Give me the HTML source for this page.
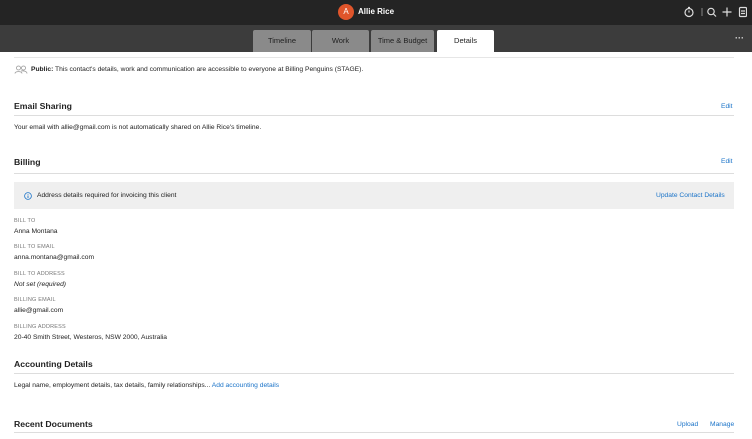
<!DOCTYPE html>
<html><head><style>
*{margin:0;padding:0;box-sizing:border-box}
body{width:752px;height:439px;overflow:hidden;background:#fff;font-family:"Liberation Sans",sans-serif;color:#222;position:relative}
.a{position:absolute;white-space:nowrap}
.s{font-size:6.7px}
.h{font-size:8.7px;font-weight:bold;color:#222}
.l{font-size:5.5px;color:#777;letter-spacing:.2px}
.ln{position:absolute;left:14px;width:720px;height:1px;background:#ddd}
.lk{color:#1a73c8;font-size:6.7px}
.tab{position:absolute;top:30px;height:22px;background:#8a8a8a;color:#222;font-size:7.5px;text-align:center;line-height:22px;border-radius:2px 2px 0 0}
</style></head><body>
<div class="a" style="left:0;top:0;width:752px;height:25px;background:#242424"></div>
<div class="a" style="left:0;top:25px;width:752px;height:27px;background:#3c3c3c"></div>
<div class="a" style="left:338px;top:4px;width:16px;height:16px;border-radius:50%;background:#e0552b;color:#fff;font-size:8px;text-align:center;line-height:16px">A</div>
<div class="a" style="left:358px;top:7px;color:#fff;font-size:8px;font-weight:bold">Allie Rice</div>
<svg class="a" style="left:683px;top:6px" width="64" height="12" viewBox="0 0 64 12" fill="none" stroke="#ddd" stroke-width="1.2">
<circle cx="6" cy="6.5" r="4"/><path d="M6 4.5V6.5M5 1.5H7"/>
<path d="M19 2V10" stroke="#777"/>
<circle cx="28" cy="5.5" r="3.2"/><path d="M30.5 8L33 10.5"/>
<path d="M44 1.5V10.5M39.5 6H48.5"/>
<rect x="56.5" y="1.5" width="7" height="9" rx="1"/><path d="M58 5H62M58 7.5H62"/>
</svg>
<div class="tab" style="left:253px;width:58px">Timeline</div>
<div class="tab" style="left:312px;width:57px">Work</div>
<div class="tab" style="left:371px;width:63px">Time &amp; Budget</div>
<div class="tab" style="left:437px;width:57px;background:#fff">Details</div>
<div class="a" style="left:735px;top:33px;color:#ddd;font-size:9px;font-weight:bold">···</div>
<div class="ln" style="top:57px;background:#e6e6e6"></div>
<svg class="a" style="left:14px;top:65px" width="14" height="9" viewBox="0 0 14 9" fill="none" stroke="#999" stroke-width=".8"><circle cx="4.5" cy="3" r="2"/><path d="M1 8.5C1 6 8 6 8 8.5"/><circle cx="9.5" cy="3" r="2"/><path d="M7 6C9 5.5 13 6 13 8.5"/></svg>
<div class="a s" style="left:31px;top:66px"><b>Public:</b> This contact's details, work and communication are accessible to everyone at Billing Penguins (STAGE).</div>
<div class="a h" style="left:14px;top:101px">Email Sharing</div>
<div class="a lk" style="left:721px;top:103px">Edit</div>
<div class="ln" style="top:115px"></div>
<div class="a s" style="left:14px;top:124px">Your email with allie@gmail.com is not automatically shared on Allie Rice's timeline.</div>
<div class="a h" style="left:14px;top:157px">Billing</div>
<div class="a lk" style="left:721px;top:158px">Edit</div>
<div class="ln" style="top:173px"></div>
<div class="a" style="left:14px;top:182px;width:720px;height:27px;background:#efefef"></div>
<svg class="a" style="left:24px;top:192px" width="8" height="8" viewBox="0 0 8 8"><circle cx="4" cy="4" r="3.4" fill="none" stroke="#1a73c8" stroke-width=".8"/><path d="M4 3.5V6M4 2V2.6" stroke="#1a73c8" stroke-width=".9"/></svg>
<div class="a s" style="left:37px;top:192px">Address details required for invoicing this client</div>
<div class="a lk" style="left:656px;top:192px">Update Contact Details</div>
<div class="a l" style="left:14px;top:218px">BILL TO</div>
<div class="a s" style="left:14px;top:228px">Anna Montana</div>
<div class="a l" style="left:14px;top:244px">BILL TO EMAIL</div>
<div class="a s" style="left:14px;top:254px">anna.montana@gmail.com</div>
<div class="a l" style="left:14px;top:271px">BILL TO ADDRESS</div>
<div class="a s" style="left:14px;top:281px;font-style:italic">Not set (required)</div>
<div class="a l" style="left:14px;top:297px">BILLING EMAIL</div>
<div class="a s" style="left:14px;top:307px">allie@gmail.com</div>
<div class="a l" style="left:14px;top:324px">BILLING ADDRESS</div>
<div class="a s" style="left:14px;top:334px">20-40 Smith Street, Westeros, NSW 2000, Australia</div>
<div class="a h" style="left:14px;top:359px">Accounting Details</div>
<div class="ln" style="top:373px"></div>
<div class="a s" style="left:14px;top:382px">Legal name, employment details, tax details, family relationships... <span style="color:#1a73c8">Add accounting details</span></div>
<div class="a h" style="left:14px;top:419px">Recent Documents</div>
<div class="a lk" style="left:677px;top:421px">Upload</div>
<div class="a lk" style="left:710px;top:421px">Manage</div>
<div class="ln" style="top:432px"></div>
</body></html>
